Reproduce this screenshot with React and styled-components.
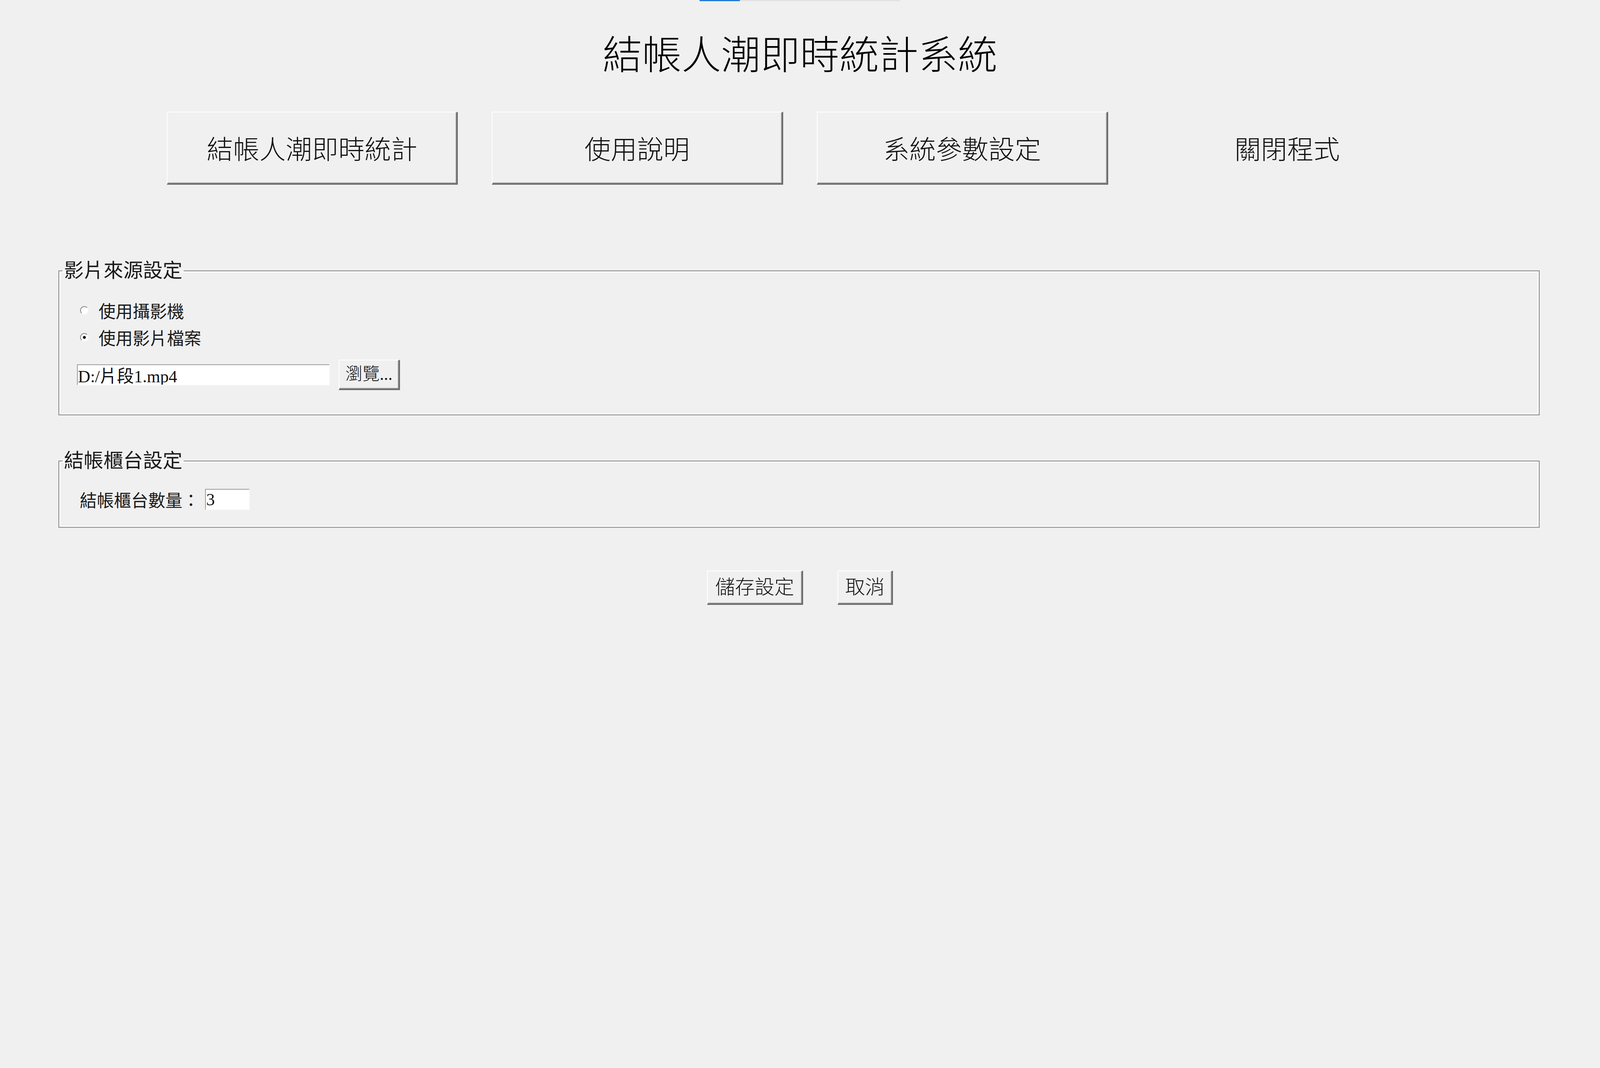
import React from 'react';
import styled, { createGlobalStyle } from 'styled-components';

// the reference was measured on a 4863px wide shot; keep its proportions at any viewport width
const u = n => `${((n * 100) / 4863).toFixed(4)}vw`;

const GlobalStyle = createGlobalStyle`
	html, body {
		margin: 0;
		padding: 0;
		background: #f0f0f0;
	}
	body {
		font-family: "Liberation Serif", "Noto Sans CJK TC", serif;
		color: #111;
		overflow: hidden;
	}
`;

const Page = styled.div`
	width: 100%;
	min-height: 100vh;
	display: flex;
	flex-direction: column;
	align-items: center;
	background: #f0f0f0;
`;

const TopStrip = styled.div`
	display: flex;
	width: ${u(610)};
	height: ${u(3)};
	background: #e2e2e2;
`;

const StripThumb = styled.div`
	width: ${u(122)};
	background: #1f7bd8;
`;

const Title = styled.h1`
	margin: ${u(86)} 0 0;
	font-family: "Noto Sans CJK TC", sans-serif;
	font-weight: 300;
	font-size: ${u(120)};
	line-height: ${u(140)};
	color: #000;
`;

const Nav = styled.nav`
	display: flex;
	gap: ${u(103)};
	margin-top: ${u(110)};
`;

const Bevel = styled.button`
	box-sizing: border-box;
	padding: 0;
	background: #f0f0f0;
	color: #111;
	font-family: "Noto Sans CJK TC", sans-serif;
	font-weight: 300;
	line-height: 1;
	border-style: solid;
	border-width: ${u(3)} ${u(5)} ${u(5)} ${u(3)};
	border-color: #ffffff #6e6e6e #6e6e6e #ffffff;
	box-shadow: inset ${u(-2)} ${u(-2)} 0 #a8a8a8;
	cursor: pointer;
`;

const NavButton = styled(Bevel)`
	width: ${u(885)};
	height: ${u(222)};
	font-size: ${u(80)};
	${p => p.$flat && `
		border-color: transparent;
		box-shadow: none;
	`}
`;

const Group = styled.fieldset`
	align-self: stretch;
	margin: ${p => u(p.$top)} ${u(183)} 0 ${u(177)};
	padding: 0;
	border: ${u(4)} solid #a3a3a3;
	box-shadow: inset 0 0 0 ${u(3)} #ffffff, 0 0 0 ${u(2)} #fafafa;
	min-width: 0;
`;

const Legend = styled.legend`
	margin-left: ${u(10)};
	padding: 0 ${u(4)};
	font-size: ${u(60)};
	line-height: ${u(70)};
	color: #1a1a1a;
`;

const GroupBody = styled.div`
	padding: ${p => p.$pad.map(u).join(' ')};
`;

const OptionRow = styled.label`
	display: flex;
	align-items: center;
	height: ${u(82)};
	font-size: ${u(52)};
	color: #1a1a1a;
`;

const Radio = styled.input.attrs({ type: 'radio' })`
	appearance: none;
	box-sizing: border-box;
	width: ${u(26)};
	height: ${u(26)};
	margin: 0 ${u(30)} 0 ${u(10)};
	border-radius: 50%;
	border: ${u(3)} solid;
	border-color: #8c8c8c #f6f6f6 #f6f6f6 #8c8c8c;
	background: #fff;
	&:checked {
		background: radial-gradient(circle, #111 0 ${u(4)}, #fff ${u(5)});
	}
`;

const FileRow = styled.div`
	display: flex;
	align-items: center;
	gap: ${u(28)};
	margin-top: ${u(27)};
`;

const TextBox = styled.input`
	box-sizing: border-box;
	width: ${p => u(p.$w)};
	height: ${u(64)};
	padding: 0 ${u(1)};
	font-family: "Liberation Serif", "Noto Sans CJK TC", serif;
	font-size: ${u(52)};
	color: #111;
	background: #fff;
	border: ${u(3)} solid;
	border-color: #9c9c9c #fbfbfb #fbfbfb #9c9c9c;
	outline: none;
`;

const SmallButton = styled(Bevel)`
	height: ${p => u(p.$h)};
	padding: 0 ${p => u(p.$px)};
	font-family: "Liberation Serif", "Noto Sans CJK TC", serif;
	font-size: ${p => u(p.$size)};
`;

const CountRow = styled.div`
	display: flex;
	align-items: center;
	gap: ${u(17)};
	height: ${u(82)};
	font-size: ${u(52)};
	color: #1a1a1a;
`;

const Actions = styled.div`
	display: flex;
	gap: ${u(104)};
	margin-top: ${u(130)};
`;

export default function App() {
	return (
		<>
			<GlobalStyle />
			<Page>
				<TopStrip>
					<StripThumb />
				</TopStrip>
				<Title>結帳人潮即時統計系統</Title>
				<Nav>
					<NavButton>結帳人潮即時統計</NavButton>
					<NavButton>使用說明</NavButton>
					<NavButton>系統參數設定</NavButton>
					<NavButton $flat>關閉程式</NavButton>
				</Nav>

				<Group $top={227}>
					<Legend>影片來源設定</Legend>
					<GroupBody $pad={[45, 0, 74, 53]}>
						<OptionRow>
							<Radio name="source" />
							使用攝影機
						</OptionRow>
						<OptionRow>
							<Radio name="source" defaultChecked />
							使用影片檔案
						</OptionRow>
						<FileRow>
							<TextBox $w={768} defaultValue="D:/片段1.mp4" />
							<SmallButton $h={92} $px={18} $size={52}>瀏覽...</SmallButton>
						</FileRow>
					</GroupBody>
				</Group>

				<Group $top={103}>
					<Legend>結帳櫃台設定</Legend>
					<GroupBody $pad={[41, 0, 42, 62]}>
						<CountRow>
							結帳櫃台數量：
							<TextBox $w={135} defaultValue="3" />
						</CountRow>
					</GroupBody>
				</Group>

				<Actions>
					<SmallButton $h={104} $px={23} $size={60}>儲存設定</SmallButton>
					<SmallButton $h={104} $px={21} $size={60}>取消</SmallButton>
				</Actions>
			</Page>
		</>
	);
}
